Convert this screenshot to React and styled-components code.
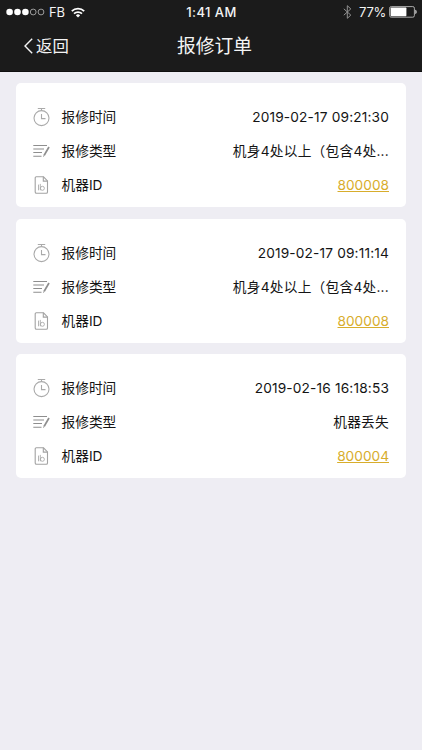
import React from 'react';
import styled, { createGlobalStyle } from 'styled-components';

const GlobalStyle = createGlobalStyle`
  * {
    box-sizing: border-box;
  }
  body {
    margin: 0;
    background: #eeedf3;
    font-family: Inter, 'Noto Sans CJK SC', sans-serif;
  }
`;

const Page = styled.div`
  min-height: 750px;
  background: #eeedf3;
`;

const Header = styled.header`
  height: 72px;
  background: #1b1b1b;
  border-bottom: 1px solid #0f0f0f;
  color: #f4f4f4;
`;

const StatusBar = styled.div`
  height: 24px;
  display: grid;
  grid-template-columns: 1fr auto 1fr;
  align-items: center;
  padding: 0 5px 0 6px;
  font-size: 13px;
  line-height: 24px;
`;

const StatusGroup = styled.div`
  display: flex;
  align-items: center;
  justify-content: ${props => (props.$end ? 'flex-end' : 'flex-start')};
`;

const Clock = styled.span`
  font-weight: 500;
  letter-spacing: 0.45px;
`;

const Carrier = styled.span`
  margin: 0 6px 0 4px;
  letter-spacing: -0.1px;
`;

const Percent = styled.span`
  margin: 0 3px 0 7px;
  letter-spacing: -0.25px;
`;

const NavBar = styled.div`
  height: 44px;
  display: grid;
  grid-template-columns: 1fr auto 1fr;
  align-items: center;
  padding: 0 17px 0 24px;
`;

const BackButton = styled.div`
  display: flex;
  align-items: center;
  gap: 3px;
  font-size: 16.4px;
  line-height: 24px;
`;

const Title = styled.div`
  padding-top: 2px;
  font-size: 18.8px;
  line-height: 28px;
`;

const OrderList = styled.div`
  display: flex;
  flex-direction: column;
  gap: 11.6px;
  padding: 11px 16px;
`;

const Card = styled.div`
  height: 124px;
  padding: 17px 17px 5px;
  background: #ffffff;
  border-radius: 5px;
`;

const Row = styled.div`
  height: 34px;
  display: flex;
  align-items: center;
  font-size: 13.7px;
  line-height: 20px;
  color: #141414;
`;

const IconSlot = styled.div`
  width: 28.5px;
  height: 20px;
  display: flex;
  align-items: center;
`;

const Label = styled.div`
  flex: 1;
`;

const Value = styled.div`
  max-width: 160px;
  white-space: nowrap;
  letter-spacing: ${props => props.$spacing || 'normal'};
`;

const MachineLink = styled.a`
  color: #d8ad2c;
  font-size: 13.7px;
  text-decoration: underline;
  text-decoration-skip-ink: none;
  text-underline-offset: 1px;
`;

const SignalIcon = () => (
  <svg width="39" height="10" viewBox="0 0 39 10">
    {[3.6, 11.5, 19.4].map(x => (
      <circle key={x} cx={x} cy="5" r="3.3" fill="#fff" />
    ))}
    {[27.2, 35].map(x => (
      <circle key={x} cx={x} cy="5" r="2.9" fill="none" stroke="#bbb" strokeWidth="0.8" />
    ))}
  </svg>
);

const WifiIcon = () => (
  <svg width="14" height="11" viewBox="0 0 14 11" fill="none" stroke="#fff" strokeWidth="1.7">
    <path d="M0.8 4.2a8.8 8.8 0 0 1 12.4 0" />
    <path d="M3 6.7a5.7 5.7 0 0 1 8 0" />
    <path d="M7 10.6L4.9 8.4a3 3 0 0 1 4.2 0z" fill="#fff" stroke="none" />
  </svg>
);

const BluetoothIcon = () => (
  <svg width="9" height="14" viewBox="0 0 9 14" fill="none" stroke="#929292" strokeWidth="1">
    <path d="M0.8 3.8l7 6.3-3.5 3.2V0.7l3.5 3.2-7 6.3" />
  </svg>
);

const BatteryIcon = () => (
  <svg width="28" height="12" viewBox="0 0 28 12">
    <rect x="0.6" y="0.6" width="24.8" height="10.6" rx="1.6" fill="none" stroke="#aaa" />
    <rect x="1.6" y="1.6" width="15.8" height="8.6" rx="0.6" fill="#fff" />
    <path d="M26.3 3.8c1.8 0.6 1.8 3.6 0 4.2z" fill="#ddd" />
  </svg>
);

const BackIcon = () => (
  <svg width="9" height="16" viewBox="0 0 9 16" fill="none" stroke="#f4f4f4" strokeWidth="1.4">
    <path d="M8.2 0.7L1 8l7.2 7.3" />
  </svg>
);

const TimerIcon = () => (
  <svg width="17" height="20" viewBox="0 0 17 20" fill="none" stroke="#aaa" strokeWidth="1.1">
    <circle cx="8.5" cy="11.1" r="7.5" />
    <path d="M4.8 1.5h7.4M8.5 1.5v2.1M8.5 7v4.6h4" />
  </svg>
);

const EditIcon = () => (
  <svg width="17" height="14" viewBox="0 0 17 14" fill="none" stroke="#8e8e8e" strokeWidth="1.1">
    <path d="M0.3 1.5h13.7M0.3 5h10.7M0.3 8.5h8.7M0.3 12.2h8.2" />
    <path d="M16 3l-4.8 8.2" strokeWidth="1.7" />
    <path d="M11.4 10.4l-0.9 2.3" strokeWidth="0.9" />
  </svg>
);

const FileIcon = () => (
  <svg width="17" height="18" viewBox="0 0 17 18" fill="none" stroke="#a2a2a2" strokeWidth="1.1">
    <path d="M3.3 0.8h7.2l4 4.1v11c0 0.8-0.5 1.3-1.3 1.3H3.5c-0.8 0-1.3-0.5-1.3-1.3V1.9c0-0.7 0.4-1.1 1.1-1.1z" />
    <path d="M10.3 0.8v4.3h4.2" />
    <path d="M5.5 8.6v5.7M7.3 7.9v6.4" strokeWidth="0.8" />
    <circle cx="9.4" cy="12.3" r="2" strokeWidth="0.8" />
  </svg>
);

const orders = [
  { time: '2019-02-17 09:21:30', type: '机身4处以上（包含4处...', machineId: '800008' },
  { time: '2019-02-17 09:11:14', type: '机身4处以上（包含4处...', machineId: '800008' },
  { time: '2019-02-16 16:18:53', type: '机器丢失', machineId: '800004' }
];

const OrderCard = ({ order }) => (
  <Card>
    <Row>
      <IconSlot>
        <TimerIcon />
      </IconSlot>
      <Label>报修时间</Label>
      <Value $spacing="0.16px">{order.time}</Value>
    </Row>
    <Row>
      <IconSlot>
        <EditIcon />
      </IconSlot>
      <Label>报修类型</Label>
      <Value $spacing="0.25px">{order.type}</Value>
    </Row>
    <Row>
      <IconSlot>
        <FileIcon />
      </IconSlot>
      <Label>机器ID</Label>
      <MachineLink>{order.machineId}</MachineLink>
    </Row>
  </Card>
);

const App = () => (
  <Page>
    <GlobalStyle />
    <Header>
      <StatusBar>
        <StatusGroup>
          <SignalIcon />
          <Carrier>FB</Carrier>
          <WifiIcon />
        </StatusGroup>
        <Clock>1:41 AM</Clock>
        <StatusGroup $end>
          <BluetoothIcon />
          <Percent>77%</Percent>
          <BatteryIcon />
        </StatusGroup>
      </StatusBar>
      <NavBar>
        <BackButton>
          <BackIcon />
          返回
        </BackButton>
        <Title>报修订单</Title>
      </NavBar>
    </Header>
    <OrderList>
      {orders.map(order => (
        <OrderCard key={order.time} order={order} />
      ))}
    </OrderList>
  </Page>
);

export default App;
